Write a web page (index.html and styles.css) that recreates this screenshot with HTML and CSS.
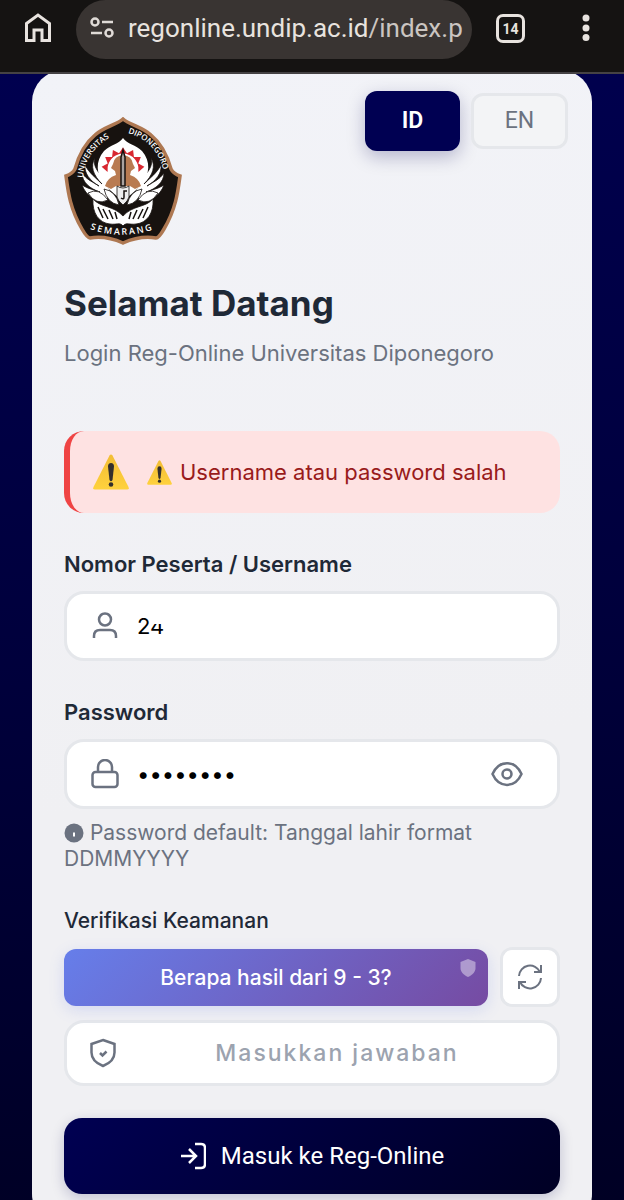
FILE: index.html
```html
<!DOCTYPE html>
<html lang="id">
<head>
<meta charset="utf-8">
<meta name="viewport" content="width=device-width, initial-scale=1">
<title>Reg-Online Universitas Diponegoro</title>
<link rel="stylesheet" href="styles.css">
</head>
<body>
<header class="browser-bar">
  <button class="bar-button" type="button" aria-label="Home">
    <svg width="28" height="32" viewBox="0 0 28 32" fill="none" stroke="#e8e3df" stroke-width="3"><path d="M2.500 11.500 14 3l11.500 8.500V28.500H18V18h-8v10.500H2.500z"/></svg>
  </button>
  <div class="address">
    <svg width="26" height="22" viewBox="0 0 26 22" fill="none" stroke="#e0dbd7" stroke-width="2.500"><circle cx="5" cy="5" r="3.500"/><path d="M12 5h11M1 16h11"/><circle cx="19" cy="16" r="3.500"/></svg>
    <span class="url">regonline.undip.ac.id<span class="url-path">/index.p</span></span>
  </div>
  <button class="tabs" type="button" aria-label="Tabs">14</button>
  <button class="bar-button menu" type="button" aria-label="Menu">
    <svg width="8" height="28" viewBox="0 0 8 28" fill="#e8e3df"><circle cx="4" cy="4" r="3.500"/><circle cx="4" cy="14" r="3.500"/><circle cx="4" cy="23.500" r="3.500"/></svg>
  </button>
</header>
<main class="page">
  <section class="card">
    <div class="card-top">
      <svg class="logo" viewBox="0 0 118 128" role="img" aria-label="Universitas Diponegoro">
        <defs><path id="ray" d="M54.500 37L59 30.500L63.500 37Q59 36 54.500 37Z"/></defs>
        <path d="M59 2C66 8 78 10 87 18C98 27 104 41 107 52C109 56 113 58 116 59C114 74 112 92 100 112C96 119 94 121 92 121C80 119 68 122 59 126C50 122 38 119 26 121C24 121 22 119 18 112C6 92 4 74 2 59C5 58 9 56 11 52C14 41 20 27 31 18C40 10 52 8 59 2Z" fill="#17120f" stroke="#ae7852" stroke-width="3.500"/>
        <g fill="#fff" stroke="#17120f" stroke-width=".8">
          <path id="wing" d="M31 41C28 53 38 55 47 76L43 82C31 84 22 79 18 68C24 72 31 73 36 75C26 72 18 65 18 56C23 63 29 65 35 69C26 64 20 56 21 48C25 56 31 60 38 67C29 58 26 49 31 41Z"/>
          <path d="M87 41C90 53 80 55 71 76L75 82C87 84 96 79 100 68C94 72 87 73 82 75C92 72 100 65 100 56C95 63 89 65 83 69C92 64 98 56 97 48C93 56 87 60 80 67C89 58 92 49 87 41Z"/>
          <path d="M29 82C37 91 49 88 59 99C69 88 81 91 89 82C90 96 83 106 72 107C66 108 62 105 59 109C56 105 52 108 46 107C35 106 28 96 29 82Z"/>
        </g>
        <path d="M59 21C63 27 72 28 78 34C87 44 86 58 77 68C72 74 65 78 59 86C53 78 46 74 41 68C32 58 31 44 40 34C46 28 55 27 59 21Z" fill="#fff"/>
        <g fill="#d82730"><use href="#ray"/><use href="#ray" transform="rotate(28 59 52)"/><use href="#ray" transform="rotate(56 59 52)"/><use href="#ray" transform="rotate(84 59 52)"/><use href="#ray" transform="rotate(-28 59 52)"/><use href="#ray" transform="rotate(-56 59 52)"/><use href="#ray" transform="rotate(-84 59 52)"/></g>
        <path d="M49 47Q50 39 59 38Q68 39 69 47L71 51L67 54L66 58Q75 61 77 69L71 72L66 69H52L47 72L41 69Q43 61 52 58L51 54L47 51Z" fill="#b97b51"/>
        <g fill="#fff" stroke="#17120f" stroke-width=".8"><path d="M24 76Q35 70 44 83Q32 89 24 76ZM94 76Q83 70 74 83Q86 89 94 76ZM40 72Q52 74 55 88Q43 86 40 72ZM78 72Q66 74 63 88Q75 86 78 72Z"/></g>
        <path d="M59 33l-2 7v29h4V40z" fill="#aaa3a0" stroke="#17120f" stroke-width="1.500"/>
        <path d="M53 69Q59 73 65 69V80Q64 84 59 88Q54 84 53 80Z" fill="#eee" stroke="#17120f" stroke-width=".8"/>
        <path d="M57 81q3 2 3-1v-6h3" fill="none" stroke="#17120f" stroke-width="1.500"/>
        <path d="M34 90l5 11M39 92l5 10M45 93l4 9M51 95l2 7M84 90l-5 11M79 92l-5 10M73 93l-4 9M67 95l-2 7" stroke="#17120f" stroke-width="1.500"/>
        <path id="arc-left" d="M19 61C20 44 30 28 52 17" fill="none"/>
        <path id="arc-right" d="M64 16C85 22 99 38 101 64" fill="none"/>
        <path id="arc-bottom" d="M26 112Q59 124 94 111" fill="none"/>
        <g class="logo-text" fill="#fff"><text><textPath href="#arc-left">UNIVERSITAS</textPath></text><text><textPath href="#arc-right">DIPONEGORO</textPath></text><text class="logo-city"><textPath href="#arc-bottom">SEMARANG</textPath></text></g>
      </svg>
      <div class="languages">
        <button class="language active" type="button">ID</button>
        <button class="language" type="button">EN</button>
      </div>
    </div>
    <h1>Selamat Datang</h1>
    <p class="subtitle">Login Reg-Online Universitas Diponegoro</p>
    <svg class="symbols" aria-hidden="true"><defs>
      <linearGradient id="amber" x1="0" y1="0" x2="0" y2="1"><stop offset="0" stop-color="#f2bd35"/><stop offset="1" stop-color="#ffd13d"/></linearGradient>
      <symbol id="warning" viewBox="0 0 36 36"><path d="M16.500 1.500q1.500-2 3 0L35.500 33q1 2.500-1.500 2.500H2Q-.500 35.500.500 33z" fill="url(#amber)"/><path d="M15 12.500q0-3.500 3-3.500t3 3.500L19.500 26q-1.500 2.500-3 0z" fill="#332f2c"/><circle cx="18" cy="30.500" r="2.300" fill="#332f2c"/></symbol>
    </defs></svg>
    <div class="alert" role="alert">
      <svg class="warning-large"><use href="#warning"/></svg>
      <span class="alert-message"><svg class="warning-small"><use href="#warning"/></svg> Username atau password salah</span>
    </div>
    <form>
      <label class="label" for="username">Nomor Peserta / Username</label>
      <div class="field">
        <svg class="field-icon" viewBox="0 0 28 30" fill="none" stroke="#6b7280" stroke-width="2.500"><circle cx="14" cy="8.500" r="6"/><path d="M3 27v-2q0-6 6-6h10q6 0 6 6v2"/></svg>
        <span class="username-wrap"><input id="username" type="text" value="24"><span class="redaction"></span></span>
      </div>
      <label class="label" for="password">Password</label>
      <div class="field">
        <svg class="field-icon" viewBox="0 0 28 30" fill="none" stroke="#6b7280" stroke-width="2.500"><rect x="1.500" y="13" width="25" height="15" rx="3"/><path d="M7 13V8a7 7 0 0 1 14 0v5"/></svg>
        <input id="password" type="password" value="24680135">
        <button class="reveal" type="button" aria-label="Tampilkan password"><svg width="32" height="26" viewBox="0 0 32 26" fill="none" stroke="#6b7280" stroke-width="2.500"><path d="M1.500 13C8 -1.500 24 -1.500 30.500 13C24 27.500 8 27.500 1.500 13Z"/><circle cx="16" cy="13" r="4.500"/></svg></button>
      </div>
      <p class="hint"><svg width="20" height="20" viewBox="0 0 20 20"><circle cx="10" cy="10" r="9.500" fill="#6b7280"/><path d="M10 9.500v4" stroke="#fff" stroke-width="2"/></svg> Password default: Tanggal lahir format DDMMYYYY</p>
      <label class="label light" for="answer">Verifikasi Keamanan</label>
      <div class="captcha">
        <div class="question">Berapa hasil dari 9 - 3?<svg class="shield" width="16" height="18" viewBox="0 0 16 18"><path d="M8 0l7.500 3v6c0 4-3 7-7.500 9C3.500 16 .500 13 .500 9V3z" fill="#fff" fill-opacity=".42"/></svg></div>
        <button class="refresh" type="button" aria-label="Ganti pertanyaan"><svg width="26" height="26" viewBox="0 0 26 26" fill="none" stroke="#6b7280" stroke-width="2"><path d="M2 12A11 11 0 0 1 23 8M24 1v7h-7M24 14A11 11 0 0 1 3 18M2 25v-7h7"/></svg></button>
      </div>
      <div class="field answer-field">
        <svg class="field-icon" viewBox="0 0 28 30" fill="none" stroke="#6b7280" stroke-width="2.500"><path d="M14 2l11.500 4v8.500c0 6-4 10.500-11.500 13.500C6.500 25 2.500 20.500 2.500 14.500V6zM11 15l2.500 2.500 4-4"/></svg>
        <input id="answer" type="text" placeholder="Masukkan jawaban">
      </div>
      <button class="submit" type="submit"><svg width="26" height="28" viewBox="0 0 26 28" fill="none" stroke="#fff" stroke-width="2.500"><path d="M1 14h15M9 7l7 7-7 7M15 2h6q4 0 4 4v16q0 4-4 4h-6"/></svg>Masuk ke Reg-Online</button>
    </form>
  </section>
</main>
</body>
</html>
```
FILE: styles.css
```css
* { box-sizing: border-box; }
body {
  margin: 0;
  height: 100vh;
  display: flex;
  flex-direction: column;
  overflow: hidden;
  font-family: Inter, sans-serif;
  color: #1f2937;
}
button, input { font: inherit; }
button { padding: 0; border: 0; background: none; display: flex; align-items: center; justify-content: center; }
svg { flex: none; }
h1, p { margin: 0; }

.browser-bar {
  position: relative;
  z-index: 1;
  flex: none;
  display: flex;
  align-items: flex-start;
  padding: 0 34px 13px 24px;
  background: #151312;
  border-bottom: 2px solid #454244;
}
.bar-button { height: 56px; }
.address {
  flex: 1;
  min-width: 0;
  height: 59px;
  margin: 0 24px;
  padding: 0 6px 4px 14px;
  display: flex;
  align-items: center;
  gap: 12px;
  background: #393432;
  border-radius: 30px;
}
.url { white-space: nowrap; font: 26px/36px Roboto, sans-serif; color: #e8e3df; }
.url-path { color: #cbc5c1; }
.tabs {
  width: 29px;
  height: 29px;
  margin-top: 14px;
  border: 3px solid #e8e3df;
  border-radius: 7px;
  color: #e8e3df;
  font: 700 14px/20px Roboto, sans-serif;
}
.menu { margin-left: 57px; }

.page {
  flex: 1;
  min-height: 0;
  padding: 0 32px;
  overflow-y: auto;
  scrollbar-width: none;
  background: linear-gradient(175deg, #00004f 0%, #00003c 50%, #000024 100%);
}
.card {
  margin-top: -4px;
  padding: 0 32px 32px;
  border-radius: 32px;
  background: linear-gradient(170deg, #f2f3f8, #f0f0f3 60%);
}
.card-top { display: flex; justify-content: space-between; align-items: flex-start; margin-right: -8px; padding-top: 21px; }
.logo { width: 118px; height: 128px; margin-top: 26px; }
.logo-text { font: 600 8px "Open Sans", sans-serif; }
.logo-city { font-size: 9px; letter-spacing: 2px; }
.languages { display: flex; align-items: center; gap: 11px; }
.language {
  width: 97px;
  height: 56px;
  border: 3px solid #e5e7eb;
  border-radius: 12px;
  font: 23px/28px Roboto, sans-serif;
  color: #6b7280;
  background: #f3f4f6;
}
.language.active {
  width: 95px;
  height: 60px;
  border: 0;
  font-weight: 600;
  color: #fff;
  background: #000052;
  box-shadow: 0 6px 18px #00005240;
}
h1 { margin-top: 36px; font-size: 35px; line-height: 44px; font-weight: 700; }
.subtitle { margin-top: 12px; font-size: 22px; line-height: 32px; color: #6b7280; }
.symbols { position: absolute; width: 0; height: 0; }
.alert {
  margin-top: 62px;
  min-height: 82px;
  padding: 0 24px 0 23px;
  display: flex;
  align-items: center;
  gap: 18px;
  border-left: 6px solid #ef4444;
  border-radius: 20px;
  background: #fee2e2;
  color: #991b1b;
  font-size: 22px;
  line-height: 28px;
}
.warning-large { width: 36px; height: 36px; }
.warning-small { width: 25px; height: 25px; }
.alert-message { display: flex; align-items: center; gap: 8px; }

.label { display: block; margin: 37px 0 13px; font-size: 22px; line-height: 28px; font-weight: 600; }
.label.light { margin: 35px 0 12px; font-size: 21px; font-weight: 500; }
.field {
  height: 70px;
  padding: 0 34px 0 24px;
  display: flex;
  align-items: center;
  gap: 18px;
  border: 3px solid #e5e7eb;
  border-radius: 20px;
  background: #fff;
}
.field-icon { width: 28px; height: 30px; }
.field input {
  width: 100%;
  min-width: 0;
  padding: 0;
  border: 0;
  outline: 0;
  background: transparent;
  font-size: 22px;
  line-height: 28px;
  color: #000;
}
.username-wrap { position: relative; flex: 1; display: flex; }
.redaction { position: absolute; left: 14px; top: 2px; width: 14px; height: 10px; background: #fff; }
.hint { margin-top: 11px; font-size: 21px; line-height: 26px; color: #6b7280; }
.hint svg { vertical-align: -3px; }
.captcha { display: flex; align-items: center; gap: 12px; }
.question {
  position: relative;
  flex: 1;
  padding: 15px 0 14px;
  border-radius: 12px;
  text-align: center;
  font-size: 21px;
  line-height: 28px;
  font-weight: 500;
  color: #fff;
  background: linear-gradient(135deg, #667eea, #764ba2);
  box-shadow: 0 4px 15px #667eea33;
}
.shield { position: absolute; top: 10px; right: 12px; }
.refresh { width: 60px; height: 60px; border: 3px solid #e5e7eb; border-radius: 12px; background: #fff; }
.answer-field { height: 66px; margin-top: 13px; padding: 0 12px 0 22px; gap: 12px; }
.answer-field input { text-align: center; font-size: 23px; font-weight: 500; letter-spacing: 2px; }
.answer-field input::placeholder { color: #9ca3af; opacity: 1; }
.submit {
  width: 100%;
  height: 76px;
  margin-top: 32px;
  gap: 15px;
  border-radius: 18px;
  color: #fff;
  font: 24px/32px Roboto, sans-serif;
  background: linear-gradient(135deg, #000052, #000024);
  box-shadow: 0 4px 14px #00005233;
}
```
